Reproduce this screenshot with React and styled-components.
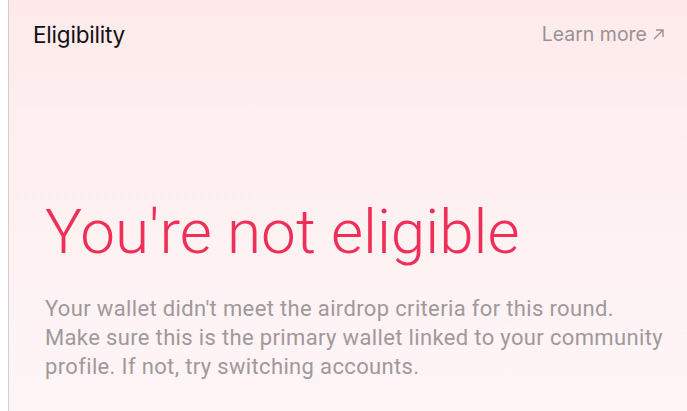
import React from 'react'
import styled, { createGlobalStyle } from 'styled-components'

const Global = createGlobalStyle`
  html, body { margin: 0; padding: 0; background: #fff; }
  body { padding-left: 8px; }
`

const Card = styled.section`
  height: 411px;
  box-sizing: border-box;
  border-left: 1px solid #cfcfcf;
  background: linear-gradient(180deg, #feeaeb 0%, #fef2f3 60%, #fef5f6 100%);
  display: flex;
  flex-direction: column;
  font-family: Inter, 'Noto Sans', sans-serif;
`

const Header = styled.header`
  display: flex;
  align-items: center;
  justify-content: space-between;
  padding: 20px 22px 0 24px;
  height: 28px;
`

const Title = styled.h2`
  margin: 0;
  font-size: 22.5px;
  font-weight: 400;
  color: #111;
  letter-spacing: -0.2px;
`

const LearnLink = styled.a`
  display: flex;
  align-items: center;
  gap: 5px;
  font-size: 19.5px;
  color: #9a9192;
  text-decoration: none;
`

const Body = styled.div`
  padding: 148px 24px 0 36px;
`

const Heading = styled.h1`
  margin: 0;
  font-family: Roboto, 'Liberation Sans', sans-serif;
  font-weight: 300;
  font-size: 62px;
  line-height: 72px;
  color: #ef2f58;
`

const Text = styled.p`
  margin: 26px 0 0;
  font-family: Roboto, 'Liberation Sans', sans-serif;
  font-size: 22px;
  line-height: 29px;
  letter-spacing: 0.35px;
  color: #a19899;
  max-width: 620px;
`

const Arrow = () => (
  <svg width="13" height="13" viewBox="0 0 13 13" fill="none" stroke="currentColor" strokeWidth="1.4">
    <path d="M2 11 L11 2 M4 2 H11 V9" />
  </svg>
)

export default function App() {
  return (
    <>
      <Global />
      <Card>
        <Header>
          <Title>Eligibility</Title>
          <LearnLink href="#">Learn more <Arrow /></LearnLink>
        </Header>
        <Body>
          <Heading>You're not eligible</Heading>
          <Text>
            Your wallet didn't meet the airdrop criteria for this round. Make sure this is
            the primary wallet linked to your community profile. If not, try switching accounts.
          </Text>
        </Body>
      </Card>
    </>
  )
}
